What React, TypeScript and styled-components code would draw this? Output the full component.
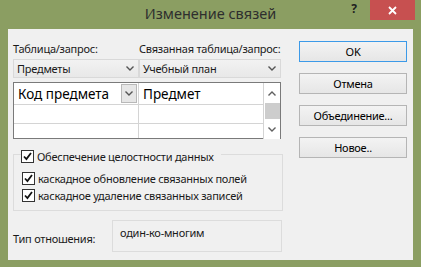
import React from 'react';
import styled, { createGlobalStyle } from 'styled-components';

const GlobalStyle = createGlobalStyle`
  html, body {
    margin: 0;
    padding: 0;
    background: #8b9e62;
  }
  body {
    font-family: 'Noto Sans', 'Open Sans', sans-serif;
    font-size: 11px;
    letter-spacing: -0.25px;
    color: #1a1a1a;
  }
`;

const Window = styled.div`
  width: 421px;
  height: 267px;
  background: #8b9e62;
  display: flex;
  flex-direction: column;
`;

const TitleBar = styled.div`
  height: 29px;
  display: grid;
  grid-template-columns: 1fr auto 1fr;
  align-items: start;
`;

const Title = styled.div`
  grid-column: 2;
  padding-top: 4px;
  font-size: 14.5px;
  letter-spacing: 0;
  line-height: 18px;
  color: #2e2e2e;
`;

const Caption = styled.div`
  grid-column: 3;
  display: flex;
  justify-content: flex-end;
  padding-right: 6px;
`;

const HelpButton = styled.div`
  width: 26px;
  height: 20px;
  display: flex;
  justify-content: center;
  padding-top: 2px;
  box-sizing: border-box;
  font-weight: bold;
  font-size: 12px;
  line-height: 14px;
  color: #1f1f1f;
  margin-right: 3px;
`;

const CloseButton = styled.div`
  width: 45px;
  height: 20px;
  background: #c75050;
  display: flex;
  align-items: center;
  justify-content: center;
`;

const Client = styled.div`
  margin: 0 8px;
  height: 231px;
  background: #f0f0f0;
  display: flex;
  padding: 12px 0 0 5px;
  box-sizing: border-box;
`;

const LeftColumn = styled.div`
  width: 270px;
  display: flex;
  flex-direction: column;
`;

const RightColumn = styled.div`
  margin-left: 16px;
  width: 108px;
  display: flex;
  flex-direction: column;
  gap: 11px;
`;

const Pair = styled.div<{ $top?: number }>`
  display: grid;
  grid-template-columns: 126px 142px;
  margin-top: ${({ $top }) => $top ?? 0}px;
`;

const Label = styled.div`
  line-height: 15px;
  white-space: nowrap;
`;

const Combo = styled.div`
  height: 19px;
  box-sizing: border-box;
  border: 1px solid #d9d9d9;
  background: linear-gradient(#f2f2f2, #e8e8e8);
  display: flex;
  align-items: center;
  justify-content: space-between;
  padding: 0 4px 0 3px;
  white-space: nowrap;
`;

const Table = styled.div`
  margin-top: 4px;
  width: 268px;
  height: 57px;
  box-sizing: border-box;
  border: 1px solid #7a7a7a;
  background: #fff;
  display: grid;
  grid-template-columns: 1fr 17px;
`;

const Rows = styled.div`
  display: flex;
  flex-direction: column;
`;

const Row = styled.div<{ $h: number }>`
  height: ${({ $h }) => $h}px;
  display: grid;
  grid-template-columns: 125px 1fr;
  border-bottom: 1px solid #d4d4d4;
  box-sizing: border-box;
  &:last-child {
    border-bottom: none;
  }
`;

const Cell = styled.div`
  border-right: 1px solid #d4d4d4;
  display: flex;
  align-items: center;
  justify-content: space-between;
  padding-left: 4px;
  font-size: 13.5px;
  letter-spacing: 0;
  color: #000;
  white-space: nowrap;
  &:last-child {
    border-right: none;
  }
`;

const CellDrop = styled.div`
  width: 16px;
  height: 19px;
  box-sizing: border-box;
  border: 1px solid #b8b8b8;
  background: #e6e6e6;
  display: flex;
  align-items: center;
  justify-content: center;
  margin-right: 1px;
`;

const ScrollBar = styled.div`
  border-left: 1px solid #d4d4d4;
  background: #fff;
  display: flex;
  flex-direction: column;
  align-items: center;
`;

const ScrollArrow = styled.div`
  height: 20px;
  width: 100%;
  display: flex;
  align-items: center;
  justify-content: center;
`;

const Thumb = styled.div`
  width: 15px;
  height: 16px;
  background: #cdcdcd;
`;

const Track = styled.div`
  flex: 1;
`;

const GroupBox = styled.div`
  margin-top: 15px;
  width: 270px;
  height: 57px;
  box-sizing: border-box;
  border: 1px solid #dcdcdc;
  padding-left: 7px;
  display: flex;
  flex-direction: column;
`;

const Legend = styled.div`
  margin-top: -5px;
  align-self: flex-start;
  background: #f0f0f0;
  padding-right: 7px;
`;

const CheckRow = styled.label<{ $top?: number }>`
  display: flex;
  align-items: center;
  gap: 3px;
  height: 13px;
  margin-top: ${({ $top }) => $top ?? 0}px;
  padding-left: ${({ $top }) => ($top ? 1 : 0)}px;
  line-height: 13px;
  white-space: nowrap;
`;

const Box = styled.span`
  width: 13px;
  height: 13px;
  box-sizing: border-box;
  border: 1px solid #333;
  background: #fff;
  display: flex;
  align-items: center;
  justify-content: center;
`;

const RelationRow = styled.div`
  margin-top: 9px;
  display: flex;
  align-items: center;
`;

const RelationLabel = styled.div`
  width: 99px;
  padding-top: 5px;
`;

const RelationBox = styled.div`
  width: 170px;
  height: 32px;
  box-sizing: border-box;
  border: 1px solid #dcdcdc;
  padding: 5px 0 0 7px;
  line-height: 14px;
`;

const Button = styled.div<{ $default?: boolean }>`
  height: 21px;
  box-sizing: border-box;
  border: 1px solid ${({ $default }) => ($default ? '#3c9ae8' : '#b5b5b5')};
  background: linear-gradient(#f3f3f3, #e6e6e6);
  display: flex;
  align-items: center;
  justify-content: center;
  color: #000;
  white-space: nowrap;
`;

const Chevron = ({ up = false, color = '#555' }: { up?: boolean; color?: string }) => (
  <svg width="8" height="5" viewBox="0 0 8 5">
    <polyline
      points={up ? '0.5,4.5 4,1 7.5,4.5' : '0.5,0.5 4,4 7.5,0.5'}
      fill="none"
      stroke={color}
      strokeWidth="1.4"
    />
  </svg>
);

const Check = () => (
  <svg width="9" height="9" viewBox="0 0 9 9">
    <polyline points="1,4.5 3.4,7 8,1" fill="none" stroke="#111" strokeWidth="1.8" />
  </svg>
);

const CheckOption = ({ text, top }: { text: string; top?: number }) => (
  <CheckRow $top={top}>
    <Box>
      <Check />
    </Box>
    <span>{text}</span>
  </CheckRow>
);

export default function App() {
  return (
    <Window>
      <GlobalStyle />
      <TitleBar>
        <Title>Изменение связей</Title>
        <Caption>
          <HelpButton>?</HelpButton>
          <CloseButton>
            <svg width="9" height="9" viewBox="0 0 9 9">
              <path d="M1 1 L8 8 M8 1 L1 8" stroke="#fff" strokeWidth="1.8" />
            </svg>
          </CloseButton>
        </Caption>
      </TitleBar>
      <Client>
        <LeftColumn>
          <Pair>
            <Label>Таблица/запрос:</Label>
            <Label>Связанная таблица/запрос:</Label>
          </Pair>
          <Pair $top={3}>
            <Combo>
              Предметы
              <Chevron />
            </Combo>
            <Combo>
              Учебный план
              <Chevron />
            </Combo>
          </Pair>
          <Table>
            <Rows>
              <Row $h={22}>
                <Cell>
                  Код предмета
                  <CellDrop>
                    <Chevron />
                  </CellDrop>
                </Cell>
                <Cell>Предмет</Cell>
              </Row>
              <Row $h={19}>
                <Cell />
                <Cell />
              </Row>
              <Row $h={14}>
                <Cell />
                <Cell />
              </Row>
            </Rows>
            <ScrollBar>
              <ScrollArrow>
                <Chevron up color="#606060" />
              </ScrollArrow>
              <Thumb />
              <Track />
              <ScrollArrow>
                <Chevron color="#606060" />
              </ScrollArrow>
            </ScrollBar>
          </Table>
          <GroupBox>
            <Legend>
              <CheckOption text="Обеспечение целостности данных" />
            </Legend>
            <CheckOption text="каскадное обновление связанных полей" top={9} />
            <CheckOption text="каскадное удаление связанных записей" top={4} />
          </GroupBox>
          <RelationRow>
            <RelationLabel>Тип отношения:</RelationLabel>
            <RelationBox>один-ко-многим</RelationBox>
          </RelationRow>
        </LeftColumn>
        <RightColumn>
          <Button $default>OK</Button>
          <Button>Отмена</Button>
          <Button>Объединение...</Button>
          <Button>Новое..</Button>
        </RightColumn>
      </Client>
    </Window>
  );
}
